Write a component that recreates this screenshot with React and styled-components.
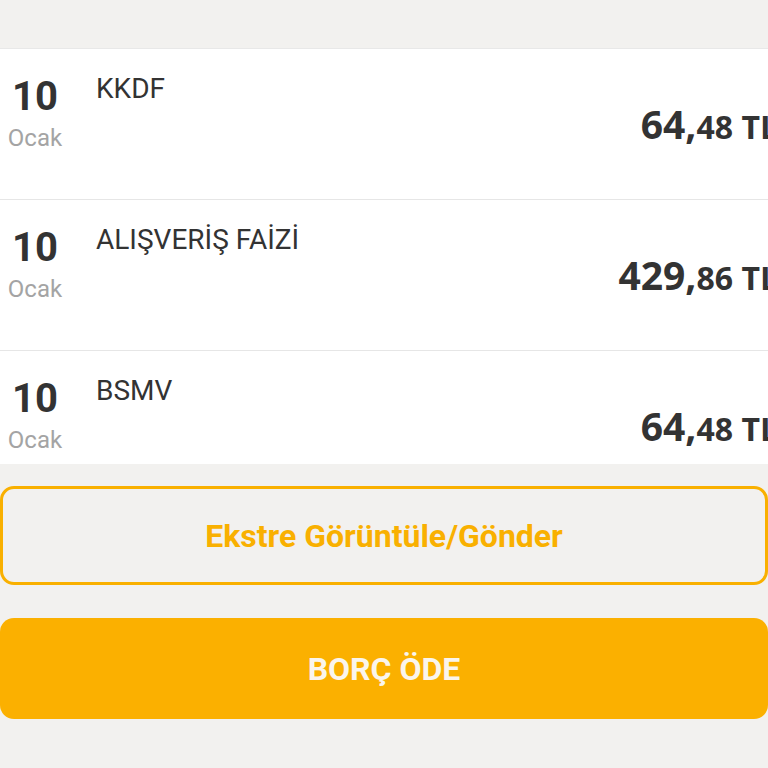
import styled, { createGlobalStyle } from "styled-components";

const GlobalStyle = createGlobalStyle`
  html, body {
    margin: 0;
    padding: 0;
    background: #f2f1ef;
    overflow: hidden;
  }
  * { box-sizing: border-box; }
`;

const items = [
  { day: "10", month: "Ocak", title: "KKDF", whole: "64", cents: "48" },
  { day: "10", month: "Ocak", title: "ALIŞVERİŞ FAİZİ", whole: "429", cents: "86" },
  { day: "10", month: "Ocak", title: "BSMV", whole: "64", cents: "48" },
];

const App = () => {
  return (
    <Page>
      <GlobalStyle />
      <List>
        {items.map((item, i) => (
          <Row key={i}>
            <DateCol>
              <Day>{item.day}</Day>
              <Month>{item.month}</Month>
            </DateCol>
            <Title>{item.title}</Title>
            <Amount>
              <Whole>{item.whole},</Whole>
              <Cents>{item.cents} TL</Cents>
            </Amount>
          </Row>
        ))}
      </List>
      <Actions>
        <Button $variant="outline">Ekstre Görüntüle/Gönder</Button>
        <Button $variant="filled">BORÇ ÖDE</Button>
      </Actions>
    </Page>
  );
};

const Page = styled.div`
  width: 768px;
  height: 768px;
  padding-top: 48px;
  background: #f2f1ef;
  font-family: Roboto, "Liberation Sans", sans-serif;
  overflow: hidden;
`;

const List = styled.div`
  height: 416px;
  overflow: hidden;
  background: #ffffff;
  border-top: 1px solid #e8e8e8;
`;

const Row = styled.div`
  display: flex;
  align-items: stretch;
  height: 151px;
  border-bottom: 1px solid #e6e6e6;
`;

const DateCol = styled.div`
  width: 96px;
  display: flex;
  flex-direction: column;
  align-items: center;
  padding-top: 25px;
  padding-right: 26px;
`;

const Day = styled.div`
  font-size: 40px;
  font-weight: 700;
  line-height: 46px;
  color: #333333;
`;

const Month = styled.div`
  font-size: 24px;
  line-height: 28px;
  color: #a4a4a4;
  margin-top: 4px;
`;

const Title = styled.div`
  flex: 1;
  padding-top: 24px;
  font-size: 28px;
  line-height: 32px;
  color: #333333;
`;

const Amount = styled.div`
  align-self: center;
  margin-right: -10px;
  margin-top: -2px;
  white-space: nowrap;
  font-family: "Open Sans", "Liberation Sans", sans-serif;
  font-weight: 700;
  color: #333333;
`;

const Whole = styled.span`
  font-size: 39px;
`;

const Cents = styled.span`
  font-size: 32px;
`;

const Actions = styled.div`
  display: flex;
  flex-direction: column;
  gap: 33px;
  padding-top: 22px;
`;

const Button = styled.button`
  width: 768px;
  height: ${(p) => (p.$variant === "outline" ? "99px" : "101px")};
  border-radius: 14px;
  font-family: Roboto, "Liberation Sans", sans-serif;
  font-weight: 700;
  font-size: 32px;
  cursor: pointer;
  border: ${(p) => (p.$variant === "outline" ? "3px solid #f9b000" : "none")};
  background: ${(p) => (p.$variant === "outline" ? "#f2f1ef" : "#fbb000")};
  color: ${(p) => (p.$variant === "outline" ? "#f9b000" : "#faf5ec")};
`;

export default App;
